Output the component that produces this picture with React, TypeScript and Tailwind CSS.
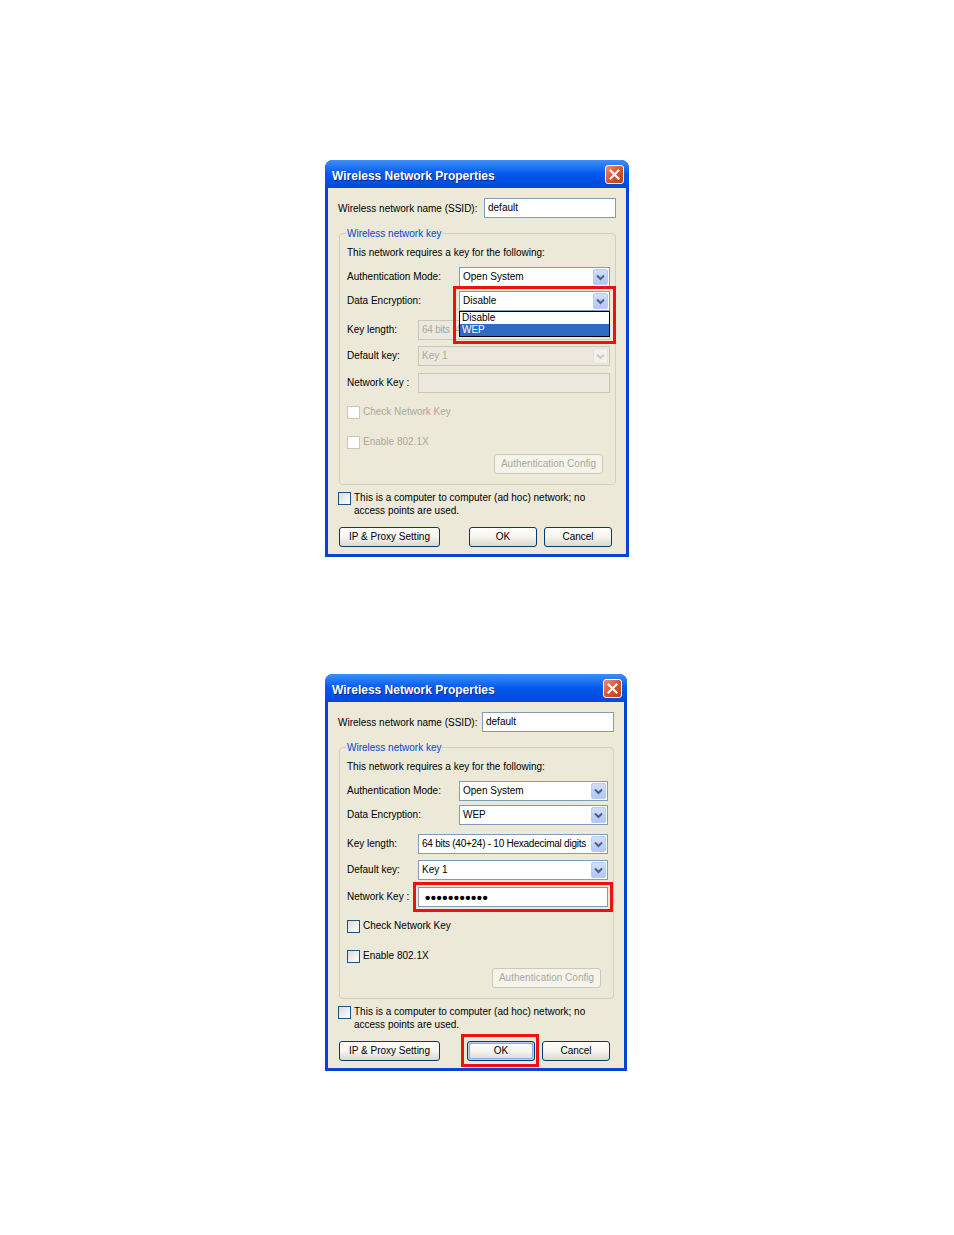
import clsx from 'clsx'
import type { ReactNode } from 'react'

type Step = 'encryption' | 'key'

const KEY_LENGTH = '64 bits (40+24) - 10 Hexadecimal digits'

function Chevron({ disabled }: { disabled?: boolean }) {
  return (
    <svg width="9" height="7" viewBox="0 0 9 7" aria-hidden>
      <path d="M1 1.5L4.5 5L8 1.5" fill="none" stroke={disabled ? '#cdcbc0' : '#4d6185'} strokeWidth="2" />
    </svg>
  )
}

function Select({
  value,
  disabled,
  className,
  textClass,
}: {
  value: string
  disabled?: boolean
  className?: string
  textClass?: string
}) {
  return (
    <div
      className={clsx(
        'flex h-[20px] min-w-0 items-center border pl-[3px] pr-px',
        disabled ? 'border-[#c9c7ba] bg-[#ebe9de] text-[#aca899]' : 'border-[#7f9db9] bg-white text-black',
        className
      )}
    >
      <span className={clsx('min-w-0 flex-1 whitespace-nowrap', textClass)}>{value}</span>
      <span
        className={clsx(
          'flex h-[16px] w-[15px] shrink-0 items-center justify-center rounded-[2px] border',
          disabled ? 'border-[#e4e2d8] bg-[#f1f0ea]' : 'border-[#b7cbf6] bg-linear-to-b from-[#d3defb] to-[#b2c6f5]'
        )}
      >
        <Chevron disabled={disabled} />
      </span>
    </div>
  )
}

function Checkbox({ disabled }: { disabled?: boolean }) {
  return (
    <span
      className={clsx(
        'block h-[13px] w-[13px] shrink-0 border',
        disabled ? 'border-[#cac8bb] bg-white' : 'border-[#1c5180] bg-linear-to-br from-[#dcdbd5] to-white'
      )}
    />
  )
}

function XpButton({
  children,
  className,
  focused,
  disabled,
}: {
  children: ReactNode
  className?: string
  focused?: boolean
  disabled?: boolean
}) {
  return (
    <button
      type="button"
      className={clsx(
        'flex h-[20px] items-center justify-center rounded-[3px] border whitespace-nowrap',
        disabled
          ? 'border-[#cac8bb] bg-[#f5f4ea] text-[#aca899]'
          : 'border-[#003c74] bg-linear-to-b from-white via-[#f5f4ef] to-[#dcd8cc] text-black',
        focused && 'shadow-[inset_0_0_0_1px_#bcd0f7,inset_0_0_0_2px_#89a9ea]',
        className
      )}
    >
      {children}
    </button>
  )
}

function CloseButton() {
  return (
    <span className="flex h-[19px] w-[19px] items-center justify-center rounded-[3px] border border-white bg-linear-to-br from-[#eb8f70] via-[#d9542c] to-[#c23d12]">
      <svg width="11" height="11" viewBox="0 0 11 11" aria-hidden>
        <path d="M1.5 1.5L9.5 9.5M9.5 1.5L1.5 9.5" stroke="white" strokeWidth="2.2" strokeLinecap="square" />
      </svg>
    </span>
  )
}

function Highlight({ className }: { className: string }) {
  return <span className={clsx('pointer-events-none absolute z-20 border-[3px] border-[#ee1111]', className)} />
}

function Dialog({ step, className }: { step: Step; className?: string }) {
  const picking = step === 'encryption'

  return (
    <section className={clsx('flex h-[397px] flex-col rounded-t-[8px] bg-[#0842d6] px-[3px] pb-[3px]', className)}>
      <header className="-mx-[3px] flex h-[28px] shrink-0 items-center justify-between rounded-t-[8px] bg-linear-to-b from-[#3d8ef8] via-[#0058ee] to-[#0049d9] pl-[7px] pr-[5px]">
        <h1 className="pt-[3px] text-[12px] font-bold leading-[14px] text-white [text-shadow:1px_1px_#0a2a8c]">
          Wireless Network Properties
        </h1>
        <CloseButton />
      </header>

      <div className="flex flex-1 flex-col bg-[#ece9d8] px-[10px] pt-[10px]">
        <div className="flex h-[20px] items-center">
          <span className="pt-px">Wireless network name (SSID):</span>
          <div className="ml-auto flex h-[20px] w-[132px] items-center border border-[#7f9db9] bg-white pl-[3px]">default</div>
        </div>

        <div className="relative ml-px mt-[15px] rounded-[4px] border border-[#d0d0bf] pb-[10px] pl-[7px] pr-[5px] pt-[12px]">
          <span className="absolute -top-[6px] left-[6px] bg-[#ece9d8] px-px text-[#0046d5]">Wireless network key</span>

          <div className="flex h-[14px] items-center">This network requires a key for the following:</div>

          <div className="mt-[7px] flex items-center">
            <span className="w-[112px] shrink-0">Authentication Mode:</span>
            <Select value="Open System" className="flex-1" />
          </div>

          <div className="mt-[4px] flex items-center">
            <span className="w-[112px] shrink-0">Data Encryption:</span>
            <div className="relative min-w-0 flex-1">
              <Select value={picking ? 'Disable' : 'WEP'} />
              {picking && (
                <>
                  <div className="absolute left-0 right-0 top-full z-10 border border-black bg-white">
                    <div className="h-[12px] pl-[2px] leading-[12px]">Disable</div>
                    <div className="h-[12px] bg-[#316ac5] pl-[2px] leading-[12px] text-white">WEP</div>
                  </div>
                  <Highlight className="-bottom-[33px] -left-[6px] -right-[6px] -top-[5px]" />
                </>
              )}
            </div>
          </div>

          <div className="mt-[9px] flex items-center">
            <span className="w-[71px] shrink-0">Key length:</span>
            <Select value={KEY_LENGTH} disabled={picking} className="flex-1" textClass="tracking-[-0.25px]" />
          </div>

          <div className="mt-[6px] flex items-center">
            <span className="w-[71px] shrink-0">Default key:</span>
            <Select value="Key 1" disabled={picking} className="flex-1" />
          </div>

          <div className="mt-[7px] flex items-center">
            <span className="w-[71px] shrink-0">Network Key :</span>
            <div className="relative min-w-0 flex-1">
              {picking ? (
                <div className="h-[20px] border border-[#c9c7ba] bg-[#ebe9de]" />
              ) : (
                <>
                  <div className="flex h-[20px] items-center border border-[#7f9db9] bg-white pl-[6px] text-[15px] font-bold leading-none tracking-[0.5px]">
                    •••••••••••
                  </div>
                  <Highlight className="-bottom-[5px] -left-[5px] -right-[5px] -top-[5px]" />
                </>
              )}
            </div>
          </div>

          <div className="mt-[12px] flex h-[14px] items-center gap-[3px]">
            <Checkbox disabled={picking} />
            <span className={clsx(picking && 'text-[#aca899]')}>Check Network Key</span>
          </div>

          <div className="mt-[16px] flex h-[14px] items-center gap-[3px]">
            <Checkbox disabled={picking} />
            <span className={clsx(picking && 'text-[#aca899]')}>Enable 802.1X</span>
          </div>

          <div className="mt-[5px] flex justify-end pr-[7px]">
            <XpButton disabled className="h-[18px] w-[109px]">
              Authentication Config
            </XpButton>
          </div>
        </div>

        <div className="mt-[7px] flex items-start gap-[3px]">
          <Checkbox />
          <p className="-mt-px leading-[13px]">
            This is a computer to computer (ad hoc) network; no
            <br />
            access points are used.
          </p>
        </div>

        <div className="mt-[10px] flex items-center pr-[4px]">
          <XpButton className="ml-px w-[101px]">IP &amp; Proxy Setting</XpButton>
          <div className="relative ml-auto">
            <XpButton focused={!picking} className="w-[68px]">
              OK
            </XpButton>
            {!picking && <Highlight className="-bottom-[6px] -left-[6px] -right-[4px] -top-[7px]" />}
          </div>
          <XpButton className="ml-[7px] w-[68px]">Cancel</XpButton>
        </div>
      </div>
    </section>
  )
}

export default function App() {
  return (
    <main className="min-h-[1235px] bg-white pl-[325px] pt-[160px] font-['Liberation_Sans',Arial,sans-serif] text-[10px] leading-[12px] text-black">
      <Dialog step="encryption" className="w-[304px]" />
      <Dialog step="key" className="mt-[117px] w-[302px]" />
    </main>
  )
}
